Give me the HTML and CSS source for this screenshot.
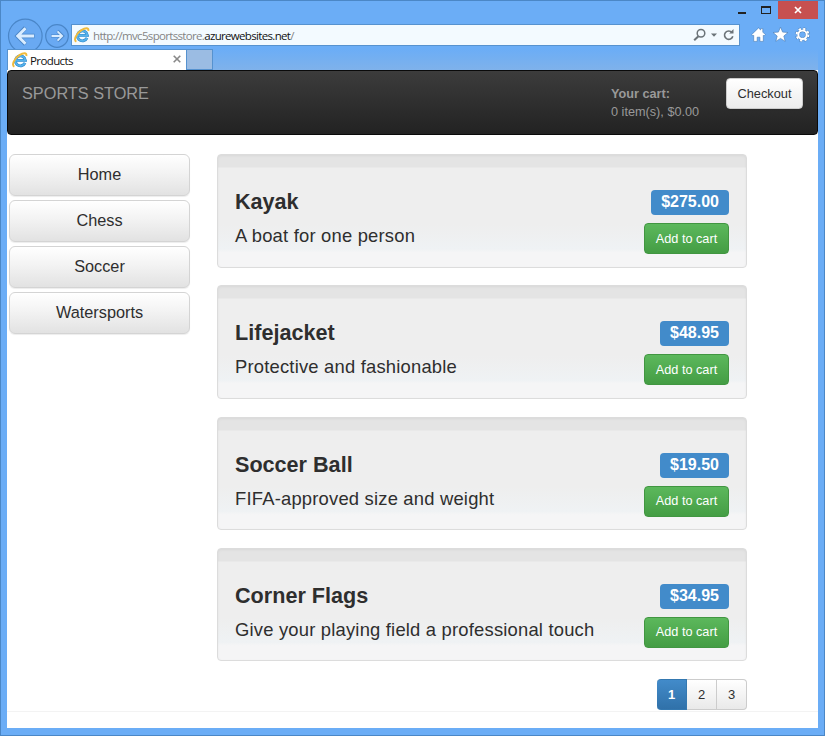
FILE: index.html
```html
<!DOCTYPE html>
<html lang="en">
<head>
<meta charset="utf-8">
<title>Products</title>
<link rel="stylesheet" href="styles.css">
</head>
<body>
<svg class="defs" width="0" height="0">
  <symbol id="ie" viewBox="0 0 16 16">
    <path d="M13 10.9A5 5 0 1 1 13.4 8.4H4.4" fill="none" stroke="#2f86cb" stroke-width="2.9"/>
    <path d="M13 10.9A5 5 0 1 1 13.4 8.4H4.4" fill="none" stroke="#55b3ec" stroke-width="1.7"/>
    <path d="M2.4 14.7C-1 13.2 2.4 6.4 7.4 3.2C11.2.8 15 .2 14.3 4" fill="none" stroke="#f1bb3c" stroke-width="2"/>
  </symbol>
</svg>
<div class="window">
  <div class="captions">
    <span class="minimize"></span><span class="maximize"></span>
    <span class="close"><svg width="8" height="8" viewBox="0 0 8 8"><path d="M1 1l6 6M7 1L1 7" stroke="#fff" stroke-width="1.7"/></svg></span>
  </div>
  <div class="toolbar">
    <svg class="history" width="64" height="36" viewBox="0 0 64 36">
      <g fill="#69a9f2" stroke="#4a86c8" stroke-width="1.2"><circle cx="18.3" cy="18" r="16.8"/><circle cx="50" cy="18" r="11.3"/></g>
      <path d="M27.5 18H11M18.5 9.8L10.5 18l8 8.2" fill="none" stroke="#4a86c8" stroke-width="4.4"/>
      <path d="M27 18H11M18.5 10.2L10.8 18l7.7 7.8" fill="none" stroke="#d9ecff" stroke-width="3"/>
      <path d="M44 18h11M50.5 13l5 5-5 5" fill="none" stroke="#4a86c8" stroke-width="3.2"/>
      <path d="M44.5 18H55M50.5 13.3l4.7 4.7-4.7 4.7" fill="none" stroke="#d9ecff" stroke-width="1.8"/>
    </svg>
    <div class="address">
      <svg class="ie" width="16" height="16"><use href="#ie"/></svg>
      <span class="url">http://mvc5sportsstore.<b>azurewebsites.net</b>/</span>
      <svg class="tools" width="42" height="14" viewBox="0 0 42 14">
        <circle cx="8" cy="5.3" r="3.8" fill="none" stroke="#6b7378" stroke-width="1.5"/><path d="M5.4 8.2L1.2 12.2" stroke="#6b7378" stroke-width="2"/>
        <path d="M18 5.6h6l-3 3.2z" fill="#6b7378"/>
        <path d="M39 4.5A4.2 4.2 0 1 0 39.8 8.2" fill="none" stroke="#6b7378" stroke-width="1.6"/><path d="M36.2 5.4H40.5V1z" fill="#6b7378"/>
      </svg>
    </div>
    <svg class="commands" width="60" height="16" viewBox="0 0 60 16">
      <g stroke="#4379b4" stroke-width=".6">
        <path d="M.6 7.7L7.5.9l2.1 2V1.6h2.2v3.5L14.4 7.7l-1.4 1.3-.7-.7v6.1H8.9v-4.2H6.2v4.2H2.7V8.3l-.7.7z" fill="#fff"/>
        <path d="M29.5.1l2.1 5 5.4.4-4.2 3.5 1.4 5.4-4.7-3-4.7 3 1.4-5.4L22 5.5l5.4-.4z" fill="#fff"/>
      </g>
      <g fill="none" stroke="#4379b4"><circle cx="51.5" cy="7.7" r="4.2" stroke-width="3"/><circle cx="51.5" cy="7.7" r="6" stroke-width="2.8" stroke-dasharray="2.7 2.01"/></g>
      <g fill="none" stroke="#fff"><circle cx="51.5" cy="7.7" r="4.2" stroke-width="2.1"/><circle cx="51.5" cy="7.7" r="5.9" stroke-width="2" stroke-dasharray="2.3 2.334"/></g>
    </svg>
  </div>
  <div class="tabs">
    <div class="tab"><svg class="ie" width="16" height="16"><use href="#ie"/></svg><span>Products</span>
      <svg class="tab-close" width="8" height="8" viewBox="0 0 8 8"><path d="M.7.7l6.6 6.6M7.3.7L.7 7.3" stroke="#888" stroke-width="1.6"/></svg></div>
    <div class="new-tab"></div>
  </div>
  <div class="page">
    <header class="navbar">
      <span class="brand">SPORTS STORE</span>
      <div class="cart"><b>Your cart:</b><span>0 item(s), $0.00</span></div>
      <a class="btn checkout">Checkout</a>
    </header>
    <div class="content">
      <nav class="categories">
        <a class="btn">Home</a><a class="btn">Chess</a><a class="btn">Soccer</a><a class="btn">Watersports</a>
      </nav>
      <main class="products">
        <article class="well"><div class="info"><h3>Kayak</h3><p>A boat for one person</p></div><div class="buy"><span class="label">$275.00</span><a class="add">Add to cart</a></div></article>
        <article class="well"><div class="info"><h3>Lifejacket</h3><p>Protective and fashionable</p></div><div class="buy"><span class="label">$48.95</span><a class="add">Add to cart</a></div></article>
        <article class="well"><div class="info"><h3>Soccer Ball</h3><p>FIFA-approved size and weight</p></div><div class="buy"><span class="label">$19.50</span><a class="add">Add to cart</a></div></article>
        <article class="well"><div class="info"><h3>Corner Flags</h3><p>Give your playing field a professional touch</p></div><div class="buy"><span class="label">$34.95</span><a class="add">Add to cart</a></div></article>
        <div class="pager"><a class="current">1</a><a>2</a><a>3</a></div>
      </main>
    </div>
    <div class="page-end"></div>
  </div>
</div>
</body>
</html>
```
FILE: styles.css
```css
* { box-sizing: border-box; }
body { margin: 0; font-family: "Liberation Sans", Arial, sans-serif; color: #2e2e2e; }
.defs { display: block; }
svg { flex: none; display: block; }

.window {
  width: 825px; height: 736px;
  border: 1px solid #4b87c6;
  padding: 0 6px 7px;
  background: #6badf6;
  display: flex; flex-direction: column;
}
.captions { height: 19px; display: flex; justify-content: flex-end; flex: none; }
.minimize { width: 8px; height: 2px; background: #222; margin: 11px 15px 0 0; }
.maximize { width: 10px; height: 8px; border: 1px solid #222; border-top-width: 2px; margin: 5px 7px 0 0; }
.minimize { margin-right: 15px; }
.close { width: 40px; height: 18px; background: #c75050; display: flex; align-items: center; justify-content: center; }

.toolbar { height: 29px; flex: none; display: flex; }
.history { margin: -2px 0 -5px; }
.address {
  width: 669px; height: 22px; margin-top: 4px;
  border: 1px solid #5692cf; background: #f3faff;
  display: flex; align-items: center; padding: 0 4px 0 2px;
}
.url { font: 11.5px "Open Sans", sans-serif; letter-spacing: -.67px; color: #858585; margin-left: 3px; white-space: nowrap; }
.url b { font-weight: 400; color: #111; }
.tools { margin-left: auto; }
.commands { margin: 7px 0 0 11px; }

.tabs { height: 22px; flex: none; display: flex; background: linear-gradient(#6badf6, #80b2ea); }
.tab {
  width: 180px; height: 22px; padding: 0 5px 0 4px;
  background: #fff; border: 1px solid #5692cf; border-bottom: 0;
  display: flex; align-items: center;
  font: 11.5px "Open Sans", sans-serif; letter-spacing: -.6px; color: #111;
}
.tab span { margin: -1px 0 0 2px; }
.tab .ie { margin-top: -2px; }
.tab-close { margin: -3px 0 0 auto; }
.new-tab { width: 26px; height: 21px; border: 1px solid #5692cf; border-left: 0; background: #9bbce3; }

.page { width: 811px; flex: 1; background: #fff; display: flex; flex-direction: column; margin-top: -1px; }
.navbar {
  height: 65px; flex: none; display: flex; align-items: flex-start;
  padding: 0 14px;
  border: 1px solid #0a0a0a; border-radius: 4px;
  background: linear-gradient(#3c3c3c, #222);
  color: #999;
}
.brand { font-size: 16.3px; line-height: 20px; margin-top: 12px; }
.cart { width: 115px; margin: 14px 0 0 auto; font-size: 12.7px; line-height: 18px; display: flex; flex-direction: column; }
.btn {
  display: flex; align-items: center; justify-content: center;
  border: 1px solid #ccc; border-radius: 4px;
  background: linear-gradient(#fff, #e0e0e0); color: #2e2e2e;
  box-shadow: inset 0 1px 0 rgba(255,255,255,.15), 0 1px 1px rgba(0,0,0,.075);
}
.checkout { width: 77px; height: 31px; font-size: 12.8px; margin-top: 7px; background: linear-gradient(#fff, #ececec); }

.content { display: flex; padding: 19px 0 0 2px; }
.categories { width: 181px; display: grid; grid-auto-rows: 42px; gap: 4px; align-content: start; margin-right: 27px; }
.categories .btn { font-size: 16.3px; border-radius: 6px; border-color: #d4d4d4; padding-bottom: 1px; background: linear-gradient(#fff, #f3f3f3 45%, #e2e2e2); }
.products { width: 530px; }
.well {
  height: 113.5px; margin-bottom: 17.8px; padding: 33px 17px 0;
  display: flex; justify-content: space-between;
  border: 1px solid #dcdcdc; border-radius: 4px;
  background: linear-gradient(#e4e4e4 12px, #eee 13px, #eeeeee 62%, #eff2f4 84%, #f5f5f6 87%);
  box-shadow: inset 0 1px 3px rgba(0,0,0,.05);
}
.info h3 { margin: 0; font-size: 21.6px; line-height: 28px; }
.info p { margin: 7px 0 0; font-size: 18.4px; letter-spacing: .2px; line-height: 26px; white-space: nowrap; }
.buy { display: flex; flex-direction: column; align-items: flex-end; padding-top: 2px; }
.label { height: 25px; padding: 0 10px; border-radius: 4px; background: #428bca; color: #fff; font-size: 16px; line-height: 24px; font-weight: bold; }
.add {
  width: 85px; height: 31px; margin-top: 8px;
  display: flex; align-items: center; justify-content: center;
  border: 1px solid #419641; border-radius: 4px;
  background: linear-gradient(#5cb85c, #449d44); color: #fff; font-size: 12.7px;
}
.pager { display: flex; justify-content: flex-end; }
.pager a {
  width: 30px; height: 31px; display: flex; align-items: center; justify-content: center;
  border: 1px solid #ccc; border-left: 0;
  background: linear-gradient(#fff, #e9e9e9); font-size: 13px;
}
.pager .current { border-color: #3478b0; border-radius: 4px 0 0 4px; background: linear-gradient(#428bca, #3071a9); color: #fff; font-weight: bold; }
.pager a:last-child { border-radius: 0 4px 4px 0; }
.page-end { border-top: 1px solid #f3f3f3; height: 17px; margin-top: auto; }
```
